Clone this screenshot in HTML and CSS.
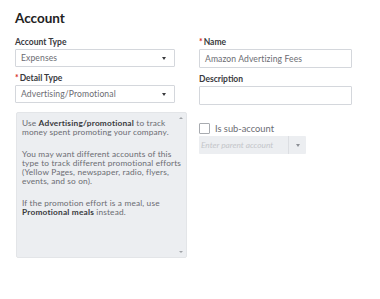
FILE: index.html
```html
<!DOCTYPE html>
<html>
<head>
<meta charset="utf-8">
<link rel="stylesheet" href="styles.css">
</head>
<body>
<div class="page">
  <h1 class="title">Account</h1>
  <div class="cols">
    <div class="col left">
      <div class="field">
        <label class="label">Account Type</label>
        <div class="select"><span>Expenses</span><span class="caret"></span></div>
      </div>
      <div class="field">
        <label class="label"><span class="req">*</span>Detail Type</label>
        <div class="select"><span>Advertising/Promotional</span><span class="caret"></span></div>
      </div>
      <div class="help">
        <div class="help-text">
          <p>Use <b>Advertising/promotional</b> to track<br>money spent promoting your company.</p>
          <p>You may want different accounts of this<br>type to track different promotional efforts<br>(Yellow Pages, newspaper, radio, flyers,<br>events, and so on).</p>
          <p>If the promotion effort is a meal, use<br><b>Promotional meals</b> instead.</p>
        </div>
        <div class="scrollbar"><span class="up"></span><span class="down"></span></div>
      </div>
    </div>
    <div class="col right">
      <div class="field">
        <label class="label"><span class="req">*</span>Name</label>
        <div class="input">Amazon Advertizing Fees</div>
      </div>
      <div class="field">
        <label class="label">Description</label>
        <div class="input"></div>
      </div>
      <div class="sub">
        <span class="checkbox"></span><span class="sub-label">Is sub-account</span>
      </div>
      <div class="parent">
        <span class="parent-text">Enter parent account</span>
        <span class="parent-btn"><span class="caret light"></span></span>
      </div>
    </div>
  </div>
</div>
</body>
</html>
```
FILE: styles.css
```css
* { box-sizing: border-box; }
html, body { margin: 0; padding: 0; background: #fff; }
body { font-family: Lato, "Noto Sans", sans-serif; color: #393a3d; }
.page { padding: 9px 0 0 15px; }
.title { margin: 0; font-size: 13.5px; font-weight: 700; line-height: 18px; color: #222; }
.cols { display: flex; gap: 24px; margin-top: 10px; }
.col.left { width: 160px; }
.col.right { width: 153px; }
.field { display: flex; flex-direction: column; margin-bottom: 6px; }
.label { font-size: 8.5px; font-weight: 700; line-height: 10px; margin-bottom: 2px; color: #393a3d; }
.req { color: #d52b1e; margin-right: 1px; }
.select, .input {
  height: 18px; border: 1px solid #d4d7dc; border-radius: 1px;
  display: flex; align-items: center; justify-content: space-between;
  padding: 0 8px 0 5px; font-size: 8.6px; letter-spacing: 0.1px; color: #6b6c72; background: #fff;
}
.input { height: 19px; }
.caret { width: 0; height: 0; border-left: 2.5px solid transparent; border-right: 2.5px solid transparent; border-top: 3px solid #393a3d; }
.caret.light { border-top-color: #8d9096; }
.help {
  margin-top: 9px; margin-left: 1px; width: 171px; height: 146px;
  background: #eceef1; border: 1px solid #e3e5e8; border-radius: 2px;
  display: flex;
}
.help-text { flex: 1; min-width: 0; padding: 6px 0 0 5px; font-size: 8.3px; line-height: 9px; color: #6b6c72; letter-spacing: 0.15px; white-space: nowrap; }
.help-text p { margin: 0 0 13px; }
.help-text b { color: #393a3d; font-weight: 700; letter-spacing: 0.2px; }
.scrollbar { flex: none; width: 9px; position: relative; }
.scrollbar .up, .scrollbar .down { position: absolute; left: 2px; width: 0; height: 0; border-left: 2px solid transparent; border-right: 2px solid transparent; }
.scrollbar .up { top: 4px; border-bottom: 2px solid #a0a3a8; }
.scrollbar .down { bottom: 4px; border-top: 2px solid #a0a3a8; }
.sub { display: flex; align-items: center; margin-top: 17px; height: 12px; }
.checkbox { width: 11px; height: 11px; border: 1px solid #a8abb0; border-radius: 1px; background: #fff; }
.sub-label { margin-left: 5px; font-size: 9.3px; color: #6b6c72; }
.parent { display: flex; margin-top: 2px; width: 107px; height: 18px; background: #eceef1; border-radius: 1px; }
.parent-text { flex: 1; display: flex; align-items: center; padding-left: 2px; font-size: 8.3px; font-style: italic; color: #c4c6ca; }
.parent-btn { width: 18px; border-left: 1px solid #dcdee2; display: flex; align-items: center; justify-content: center; }
```
